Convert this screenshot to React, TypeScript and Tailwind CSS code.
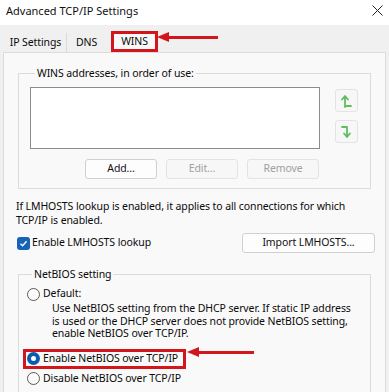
import React from "react";

const font = { fontFamily: '"Noto Sans", "Open Sans", sans-serif' };

function UpIcon() {
  return (
    <svg width="11" height="14" viewBox="0 0 11 14">
      <path d="M4 13 V3 M1 5.5 L4 2 L7 5.5 M4 12 H10" stroke="#5fbf5f" strokeWidth="1.8" fill="none" strokeLinecap="round" strokeLinejoin="round" />
    </svg>
  );
}
function DownIcon() {
  return (
    <svg width="11" height="14" viewBox="0 0 11 14">
      <path d="M1 2 H6 V12 M3 8.5 L6 12 L9 8.5" stroke="#5fbf5f" strokeWidth="1.8" fill="none" strokeLinecap="round" strokeLinejoin="round" />
    </svg>
  );
}

function Radio({ checked }: { checked?: boolean }) {
  return checked ? (
    <span className="flex h-[13px] w-[13px] shrink-0 items-center justify-center rounded-full bg-[#0a5bb0]">
      <span className="h-[5px] w-[5px] rounded-full bg-white" />
    </span>
  ) : (
    <span className="h-[13px] w-[13px] shrink-0 rounded-full border border-[#5a5a5a] bg-[#fbfbfb]" />
  );
}

function Btn({ children, disabled, className }: { children: React.ReactNode; disabled?: boolean; className?: string }) {
  return (
    <div
      className={
        "flex items-center justify-center rounded-[3px] border " +
        (disabled ? "border-[#e3e3e3] bg-[#f7f7f7] text-[#a0a0a0] " : "border-[#d0d0d0] bg-[#fdfdfd] text-[#111] ") +
        (className || "")
      }
    >
      {children}
    </div>
  );
}

function RedArrow({ className }: { className: string }) {
  return (
    <div className={"absolute flex items-center " + className}>
      <svg width="12" height="10" viewBox="0 0 12 10">
        <path d="M0 5 L12 0 L12 10 Z" fill="#d3151c" />
      </svg>
      <div className="h-[3px] flex-1 bg-[#d3151c]" />
    </div>
  );
}

export default function App() {
  return (
    <div className="relative h-[392px] w-[389px] overflow-hidden bg-[#f0f0f0] text-[#0a0a0a]" style={font}>
      {/* title bar */}
      <div className="flex h-[25px] items-center justify-between bg-white pb-[4px] pl-[6px] pr-[5px]">
        <span className="text-[11px] leading-none text-[#111]">Advanced TCP/IP Settings</span>
        <svg width="11" height="11" viewBox="0 0 11 11" className="mr-[1px]">
          <path d="M0.5 0.5 L10.5 10.5 M10.5 0.5 L0.5 10.5" stroke="#222" strokeWidth="1" />
        </svg>
      </div>

      <div className="text-[10.5px] tracking-[-0.1px]">
        {/* tabs */}
        <div className="flex h-[27px] items-end pl-[5px]">
          <div className="flex h-[19px] w-[62px] items-center justify-center border-r border-[#dadada]">IP Settings</div>
          <div className="flex h-[19px] w-[39px] items-center justify-center">DNS</div>
          <div className="ml-[5px] flex h-[21px] w-[47px] items-center justify-center border-[3px] border-[#d3151c] bg-[#f9f9f9]">
            <span>WINS</span>
          </div>
        </div>

        {/* tab page */}
        <div className="ml-[3px] h-[360px] w-[383px] border border-[#dcdcdc] bg-[#f9f9f9] pt-[12px]">
          <fieldset className="mx-[14px] border border-[#dcdcdc] px-[11px] pb-[9px]">
            <legend className="ml-[5px] px-[2px] leading-[16px]">WINS addresses, in order of use:</legend>
            <div className="mt-[6px] flex items-start">
              <div className="h-[62px] w-[290px] border border-[#8c8c8c] bg-white" />
              <div className="ml-[15px] mt-[2px] flex flex-col gap-[8px]">
                <div className="flex h-[23px] w-[23px] items-center justify-center rounded-[3px] border border-[#e4e4e4] bg-[#f7f7f7]">
                  <UpIcon />
                </div>
                <div className="flex h-[23px] w-[23px] items-center justify-center rounded-[3px] border border-[#e4e4e4] bg-[#f7f7f7]">
                  <DownIcon />
                </div>
              </div>
            </div>
            <div className="mt-[10px] flex gap-[9px] pl-[55px]">
              <Btn className="h-[20px] w-[72px]">Add...</Btn>
              <Btn disabled className="h-[20px] w-[72px]">Edit...</Btn>
              <Btn disabled className="h-[20px] w-[72px]">Remove</Btn>
            </div>
          </fieldset>

          <p className="ml-[12px] mt-[10px] leading-[14px]">
            If LMHOSTS lookup is enabled, it applies to all connections for which
            <br />
            TCP/IP is enabled.
          </p>

          <div className="mt-[6px] flex h-[20px] items-center pl-[13px] pr-[10px]">
            <span className="flex h-[13px] w-[13px] items-center justify-center rounded-[3px] bg-[#1763b5]">
              <svg width="9" height="9" viewBox="0 0 9 9">
                <path d="M1.5 4.8 L3.6 6.8 L7.6 2.2" stroke="white" strokeWidth="1.3" fill="none" />
              </svg>
            </span>
            <span className="ml-[2px]">Enable LMHOSTS lookup</span>
            <Btn className="ml-auto h-[20px] w-[133px]">Import LMHOSTS...</Btn>
          </div>

          <fieldset className="mx-[14px] mt-[13px] border border-[#dcdcdc] pb-[10px] pl-[8px]">
            <legend className="ml-[5px] px-[2px] leading-[16px]">NetBIOS setting</legend>
            <div className="mt-[5px] flex h-[14px] items-center gap-[3px]">
              <Radio />
              <span>Default:</span>
            </div>
            <p className="ml-[25px] mt-[1px] leading-[12.5px]">
              Use NetBIOS setting from the DHCP server. If static IP address
              <br />
              is used or the DHCP server does not provide NetBIOS setting,
              <br />
              enable NetBIOS over TCP/IP.
            </p>
            <div className="-ml-[4px] mt-[9px] flex h-[20px] w-[163px] items-center gap-[3px] border-[3px] border-[#d3151c] pl-[1px]">
              <Radio checked />
              <span>Enable NetBIOS over TCP/IP</span>
            </div>
            <div className="mt-[3px] flex h-[14px] items-center gap-[3px]">
              <Radio />
              <span>Disable NetBIOS over TCP/IP</span>
            </div>
          </fieldset>
        </div>
      </div>
      <RedArrow className="left-[157px] top-[32px] w-[61px]" />
      <RedArrow className="left-[187px] top-[347px] w-[67px]" />
    </div>
  );
}
